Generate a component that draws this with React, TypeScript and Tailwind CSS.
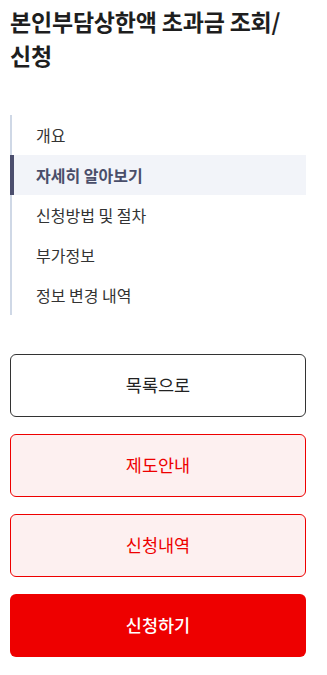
import React from 'react';

const navItems = ['개요', '자세히 알아보기', '신청방법 및 절차', '부가정보', '정보 변경 내역'];

export default function App() {
  const active = 1;
  return (
    <div className="w-[327px] min-h-[675px] bg-white px-[10px] pt-[4px] font-['Noto_Sans_CJK_KR','Noto_Sans',sans-serif] text-[#222]">
      <h1 className="text-[23px] font-bold leading-[34px] tracking-[-0.2px] text-[#1e1e1e]">
        본인부담상한액 초과금 조회/
        <br />
        신청
      </h1>

      <nav className="mt-[43px] border-l-2 border-[#cfd8e6] w-[296px]">
        <ul>
          {navItems.map((item, i) => (
            <li
              key={item}
              className={`h-[40px] flex items-center text-[16px] ${
                i === active
                  ? 'bg-[#f2f4f9] font-bold text-[#4a4e6a] -ml-[2px] border-l-4 border-[#4c4f6e] pl-[22px]'
                  : 'pl-[24px] text-[#333]'
              }`}
            >
              {item}
            </li>
          ))}
        </ul>
      </nav>

      <div className="mt-[39px] flex flex-col gap-[17px] w-[296px]">
        <button className="h-[63px] rounded-[6px] border border-[#333] bg-white text-[17.5px] text-[#222]">
          목록으로
        </button>
        <button className="h-[63px] rounded-[6px] border border-[#ee0000] bg-[#fdf0f0] text-[17.5px] text-[#ee0000]">
          제도안내
        </button>
        <button className="h-[63px] rounded-[6px] border border-[#ee0000] bg-[#fdf0f0] text-[17.5px] text-[#ee0000]">
          신청내역
        </button>
        <button className="h-[63px] rounded-[6px] bg-[#ee0000] text-[17.5px] font-medium text-white">
          신청하기
        </button>
      </div>
    </div>
  );
}
